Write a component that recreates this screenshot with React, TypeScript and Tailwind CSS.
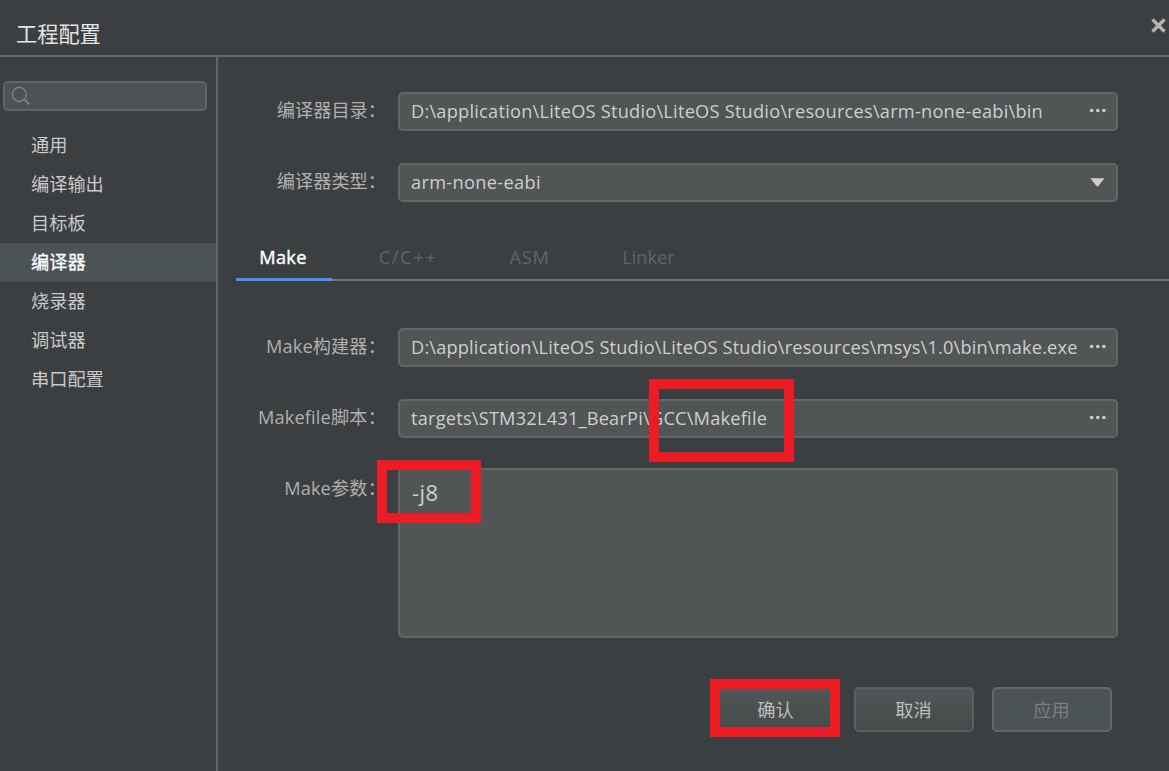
import React, { useState } from 'react';
import clsx from 'clsx';

const menu = ['通用', '编译输出', '目标板', '编译器', '烧录器', '调试器', '串口配置'];

const tabs = [
  { name: 'Make', style: 'w-24 pr-0.5 tracking-[0.3px]' },
  { name: 'C/C++', style: 'w-[152px] tracking-[1.6px]' },
  { name: 'ASM', style: 'w-[91px] tracking-[0.8px]' },
  { name: 'Linker', style: 'w-[147px] tracking-normal' },
];

const box = 'w-[720px] rounded-[5px] border-2 border-[#666464] bg-[#515555] text-[#d0cece]';

function Dots() {
  return (
    <svg width="17" height="5" viewBox="0 0 17 5" fill="#d0cece" className="mb-[3px] shrink-0">
      <circle cx="2.7" cy="2.5" r="1.8" />
      <circle cx="8.8" cy="2.5" r="1.8" />
      <circle cx="14.9" cy="2.5" r="1.8" />
    </svg>
  );
}

function Arrow() {
  return (
    <svg width="15" height="9" viewBox="0 0 15 9" fill="#d0cece" className="mr-px shrink-0">
      <path d="M0.3 0.3h14.2L8.3 8.1q-0.9 0.9-1.8 0z" />
    </svg>
  );
}

function Label({ children, className }: { children: React.ReactNode; className?: string }) {
  return (
    <label className={clsx('w-[168px] shrink-0 text-right whitespace-nowrap text-[#b1afaf]', className)}>
      {children}
    </label>
  );
}

type FieldProps = {
  label: string;
  value: string;
  icon: React.ReactNode;
  className?: string;
  labelClass?: string;
};

function Field({ label, value, icon, className, labelClass }: FieldProps) {
  return (
    <div className="flex h-[39px] items-center gap-3">
      <Label className={clsx('pb-1', labelClass)}>{label}</Label>
      <div className={clsx(box, 'flex h-[39px] items-center justify-between pr-2.5 pl-[11px]')}>
        <span className={clsx('pb-0.5 whitespace-nowrap', className)}>{value}</span>
        {icon}
      </div>
    </div>
  );
}

export default function App() {
  const [active, setActive] = useState('编译器');
  const [tab, setTab] = useState('Make');

  return (
    <div className="relative flex h-[771px] w-[1169px] flex-col overflow-hidden bg-[#3c3f41] font-['Open_Sans','Noto_Sans_CJK_SC',sans-serif] text-[18.2px] leading-6">
      <header className="flex h-[57px] shrink-0 justify-between border-b-2 border-[#666464] pl-4">
        <h1 className="pt-[22px] text-[21.2px] text-[#e6e4e4]">工程配置</h1>
        <button aria-label="close" className="mt-[18px] mr-[3px] h-[15px] w-[15px]">
          <svg width="15" height="15" viewBox="0 0 15 15" stroke="#b5b3b3" strokeWidth="3.4">
            <path d="M1.5 1.5l12 12M13.5 1.5l-12 12" />
          </svg>
        </button>
      </header>
      <div className="flex grow">
        <aside className="w-[218px] shrink-0 border-r-2 border-[#666464] pt-6">
          <div className="ml-[3px] flex h-[30px] w-[204px] items-center rounded-[5px] border-2 border-[#666464] bg-[#4b5356] pl-1.5">
            <svg width="20" height="20" viewBox="0 0 20 20" fill="none" stroke="#828593">
              <circle cx="8.3" cy="8.3" r="7" strokeWidth="1.2" />
              <path d="M13.2 13.2l5.3 5.3" strokeWidth="1.7" />
            </svg>
          </div>
          <ul className="mt-[15px]">
            {menu.map((item) => (
              <li
                key={item}
                onClick={() => setActive(item)}
                className={clsx(
                  'flex h-[39px] items-center pb-px pl-[31px]',
                  item === active
                    ? 'bg-[#4b5356] text-white [-webkit-text-stroke:0.3px]'
                    : 'text-[#cbc9c9]'
                )}
              >
                {item}
              </li>
            ))}
          </ul>
        </aside>
        <main className="flex grow flex-col pt-[35px]">
          <div className="flex flex-col gap-8">
            <Field
              label="编译器目录："
              value="D:\application\LiteOS Studio\LiteOS Studio\resources\arm-none-eabi\bin"
              icon={<Dots />}
              className="tracking-[0.24px]"
            />
            <Field
              label="编译器类型："
              value="arm-none-eabi"
              icon={<Arrow />}
              className="tracking-[0.33px]"
            />
          </div>
          <nav className="mt-[31px] ml-[18px] flex h-12 items-stretch">
            {tabs.map(({ name, style }) => (
              <button
                key={name}
                onClick={() => setTab(name)}
                className={clsx(
                  'flex justify-center pt-3',
                  style,
                  name === tab
                    ? 'border-b-[3px] border-[#4a8ff7] text-white [-webkit-text-stroke:0.4px]'
                    : 'border-b-2 border-[#757373] text-[#626364]'
                )}
              >
                {name}
              </button>
            ))}
            <div className="grow border-b-2 border-[#757373]" />
          </nav>
          <div className="mt-[47px] flex flex-col gap-8">
            <Field
              label="Make构建器："
              value="D:\application\LiteOS Studio\LiteOS Studio\resources\msys\1.0\bin\make.exe"
              icon={<Dots />}
              className="tracking-[0.18px]"
              labelClass="tracking-[0.12px]"
            />
            <Field
              label="Makefile脚本："
              value="targets\STM32L431_BearPi\GCC\Makefile"
              icon={<Dots />}
              className="tracking-[0.22px]"
              labelClass="tracking-[0.16px]"
            />
          </div>
          <div className="mt-[30px] flex gap-3">
            <Label className="pt-2 tracking-[0.15px]">Make参数：</Label>
            <div className={clsx(box, 'h-[170px] pt-[10px] pl-3 text-[22px] tracking-[0.4px]')}>-j8</div>
          </div>
          <div className="mt-[49px] mr-[57px] flex justify-end gap-[18px]">
            <button className="h-[45px] w-[120px] rounded-[5px] border-2 border-[#5c5f60] bg-linear-to-b from-[#525658] to-[#454a4a] pr-px text-[#bfbdbd]">
              确认
            </button>
            <button className="h-[45px] w-[120px] rounded-[5px] border-2 border-[#5c5f60] bg-linear-to-b from-[#525658] to-[#454a4a] pr-px text-[#bfbdbd]">
              取消
            </button>
            <button className="h-[45px] w-[120px] rounded-[5px] border-2 border-[#666464] bg-[#4b5356] pr-px text-[#7d7f80]">
              应用
            </button>
          </div>
        </main>
      </div>

      {/* highlight marks over the form */}
      <div className="pointer-events-none absolute top-[379px] left-[649px] h-[83px] w-[145px] border-10 border-[#ed1c24]" />
      <div className="pointer-events-none absolute top-[460px] left-[377px] h-[63px] w-[104px] border-10 border-[#ed1c24]" />
      <div className="pointer-events-none absolute top-[679px] left-[710px] h-[58px] w-[130px] border-10 border-[#ed1c24]" />
    </div>
  );
}
